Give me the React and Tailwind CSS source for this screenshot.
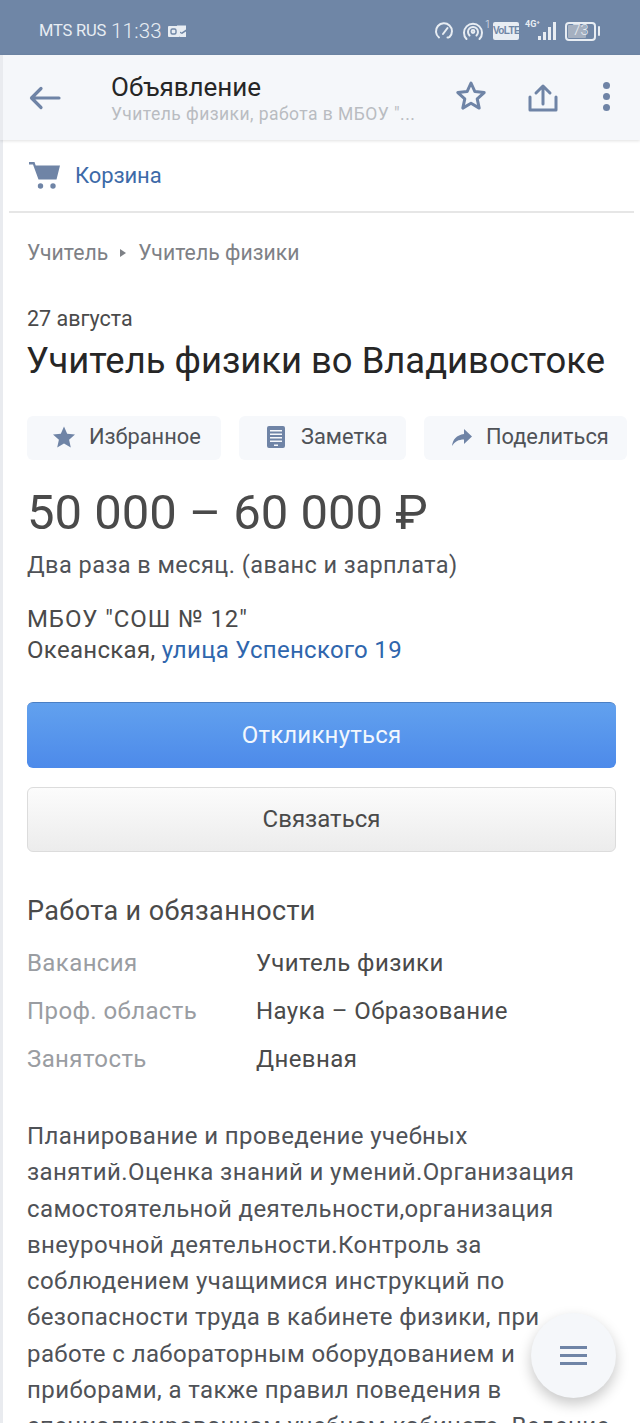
import React from "react";

const slate = "#6f84a6";

function Status() {
  return (
    <div className="h-[55px] pt-[7px] bg-[#6f86a6] flex items-center justify-between pl-[39px] pr-[40px] text-[#e8edf3] shrink-0">
      <div className="flex items-center">
        <span className="text-[16.5px] tracking-[-0.2px]">MTS RUS</span>
        <span className="text-[20.5px] ml-[5px] font-light tracking-[0.2px]">11:33</span>
        <svg width="19" height="14" viewBox="0 0 19 14" className="ml-[6px]">
          <rect x="0" y="2" width="12" height="11" rx="1" fill="#e8edf3" />
          <rect x="3" y="5" width="5" height="5" rx="1.5" fill="none" stroke="#6f86a6" strokeWidth="1.4" />
          <path d="M9 1.5h9v4l-4.5 3L9 5.5zM12 9l2 1 4-2.5V13h-6z" fill="#e8edf3" />
        </svg>
      </div>
      <div className="flex items-center">
        <svg width="20" height="20" viewBox="0 0 20 20" fill="none" stroke="#e8edf3" strokeWidth="2" strokeLinecap="round">
          <path d="M5 16.500A8 8 0 1 1 15.500 16" />
          <path d="M9 13l4.500-6" />
          <path d="M13.500 16.500h1" />
        </svg>
        <svg width="22" height="22" viewBox="0 0 22 22" fill="none" stroke="#e8edf3" strokeWidth="2" strokeLinecap="round" className="ml-[8px]">
          <path d="M4.500 19a9 9 0 1 1 13 0" />
          <path d="M7.500 15.500a5 5 0 1 1 7 0" />
          <circle cx="11" cy="11.500" r="1.400" />
        </svg>
        <span className="text-[10px] self-start mt-[-3px] ml-[1px] font-light w-[5px]">1</span>
        <div className="ml-[3px] w-[26px] h-[18px] bg-[#e8edf3] rounded-[2px] text-[#6f86a6] text-[10px] leading-[18px] font-bold text-center tracking-[-0.6px] font-['Liberation_Sans',sans-serif] overflow-hidden">VoLTE</div>
        <div className="relative ml-[6px] w-[32px] h-[20px]">
          <span className="absolute left-0 top-[-2px] text-[9px] font-bold leading-[10px]">4G⁺</span>
          <svg width="32" height="20" viewBox="0 0 32 20" className="absolute inset-0" fill="#e8edf3">
            <rect x="13" y="15" width="3" height="4" />
            <rect x="18" y="11" width="3" height="8" />
            <rect x="23" y="6" width="3" height="13" />
            <rect x="28" y="1" width="3" height="18" />
          </svg>
        </div>
        <div className="ml-[8px] w-[31px] h-[19px] rounded-[4px] border-2 border-[#e8edf3] p-[1px] relative">
          <div className="h-full w-[73%] bg-[#a5b0c0] rounded-[1px]" />
          <span className="absolute inset-0 flex items-center justify-center text-[14.5px] font-light leading-none">73</span>
        </div>
        <div className="ml-[2px] w-[2px] h-[10px] bg-[#e8edf3] rounded-[1px]" />
      </div>
    </div>
  );
}

function Header() {
  return (
    <div className="h-[85px] bg-[#f5f7fa] border-l-[3px] border-[#e9ebef] shadow-[0_1px_3px_rgba(0,0,0,0.12)] flex items-center relative z-10 shrink-0">
      <svg width="32" height="24" viewBox="0 0 32 24" fill="none" stroke={slate} strokeWidth="3.2" strokeLinecap="round" strokeLinejoin="round" className="ml-[26px] mt-[1px]">
        <path d="M30 12H3M12 2.500L2.500 12 12 21.500" />
      </svg>
      <div className="ml-[50px] w-[330px] mt-[3px]">
        <div className="text-[26px] leading-[30px] text-[#262626]">Объявление</div>
        <div className="text-[17.5px] leading-[24px] text-[#b9bcc1] whitespace-nowrap tracking-[0.45px]">Учитель физики, работа в МБОУ "...</div>
      </div>
      <svg width="32" height="32" viewBox="0 0 32 32" fill="none" stroke={slate} strokeWidth="3" strokeLinejoin="round" className="ml-[14px] mt-[-4px]">
        <path d="M16 3l3.900 8.600 9.300 1-7 6.300 2 9.200-8.200-4.800-8.200 4.800 2-9.200-7-6.300 9.300-1z" />
      </svg>
      <svg width="30" height="30" viewBox="0 0 30 30" fill="none" stroke={slate} strokeWidth="3" strokeLinecap="round" strokeLinejoin="round" className="ml-[41px]">
        <path d="M2 14v13h26V14M15 21V3M8 10l7-7 7 7" />
      </svg>
      <div className="ml-[45px] mt-[-3px] flex flex-col gap-[4px]">
        <div className="w-[7px] h-[7px] rounded-full bg-[#6f84a6]" />
        <div className="w-[7px] h-[7px] rounded-full bg-[#6f84a6]" />
        <div className="w-[7px] h-[7px] rounded-full bg-[#6f84a6]" />
      </div>
    </div>
  );
}

function Chip({ icon, children, className }) {
  return (
    <div className={"h-[44px] pb-[2px] rounded-[6px] bg-[#f6f8fb] flex items-center text-[21.8px] text-[#4f5257] " + className}>
      {icon}
      {children}
    </div>
  );
}

function Row({ label, value }) {
  return (
    <div className="flex h-[48px] items-center text-[24px] tracking-[0.4px]">
      <div className="w-[229px] text-[#9a9da2]">{label}</div>
      <div className="text-[#4a4a4a]">{value}</div>
    </div>
  );
}

export default function App() {
  return (
    <div className="relative w-[640px] h-[1423px] overflow-hidden bg-white flex flex-col font-['Roboto','Noto_Sans',sans-serif]">
      <Status />
      <Header />
      <div className="flex-1 border-l-[3px] border-[#e9ebef] overflow-hidden">
        <div className="mx-[6px] h-[73px] border-b-2 border-[#e6e6e6] flex items-center pl-[20px]">
          <svg width="32" height="30" viewBox="0 0 32 30" fill={slate}>
            <path d="M0 1h5.500l1.200 3.500H31l-3.500 14H9.500L4 3.500H0z" />
            <circle cx="11.500" cy="25" r="2.700" />
            <circle cx="24" cy="25" r="2.700" />
          </svg>
          <span className="ml-[14px] text-[22px] text-[#3d6aa8] tracking-[-0.1px]">Корзина</span>
        </div>
        <div className="pl-[24px]">
          <div className="flex items-center h-[30px] mt-[25px] text-[21.2px] text-[#7e8186]">
            <span>Учитель</span>
            <span className="mx-[12px] w-0 h-0 border-y-[4.5px] border-y-transparent border-l-[6px] border-l-[#7e8186]" />
            <span className="tracking-[0.05px]">Учитель физики</span>
          </div>
          <div className="mt-[36px] h-[30px] leading-[30px] text-[21.5px] text-[#4a4a4a]">27 августа</div>
          <div className="mt-[2px] ml-[-1px] h-[50px] leading-[50px] text-[36.4px] text-[#262626] whitespace-nowrap">Учитель физики во Владивостоке</div>
          <div className="mt-[30px] flex">
            <Chip className="w-[194px] pl-[25px]" icon={
              <svg width="24" height="24" viewBox="0 0 24 24" fill={slate} className="mr-[13px]"><path d="M12 1.500l3.200 7.200 7.800.8-5.900 5.200 1.700 7.700L12 18.400l-6.800 4 1.700-7.700L1 9.500l7.800-.8z" /></svg>
            }>Избранное</Chip>
            <Chip className="w-[167px] ml-[18px] pl-[28px]" icon={
              <svg width="18" height="22" viewBox="0 0 18 22" className="mr-[16px]"><path fillRule="evenodd" fill={slate} d="M2 0h14a2 2 0 0 1 2 2v18a2 2 0 0 1-2 2H2a2 2 0 0 1-2-2V2a2 2 0 0 1 2-2zM3 4v1.500h12V4zm0 3.500V9h12V7.500zM3 11v1.500h12V11zm0 3.500V16h12v-1.500zM7 18.500V20h4v-1.500z" /></svg>
            }>Заметка</Chip>
            <Chip className="w-[203px] ml-[18px] pl-[28px]" icon={
              <svg width="20" height="17" viewBox="0 0 20 17" fill={slate} className="mr-[14px]"><path d="M12 0l8 7.500-8 7.500v-4.500C6.500 10.500 3 12.500 0 17c.8-6.500 4.500-11 12-12z" /></svg>
            }>Поделиться</Chip>
          </div>
          <div className="mt-[23px] h-[60px] leading-[60px] text-[49px] text-[#4a4a4a]">50 000 – 60 000 ₽</div>
          <div className="mt-[6px] h-[32px] leading-[32px] text-[23.5px] tracking-[0.45px] text-[#4f5257]">Два раза в месяц. (аванс и зарплата)</div>
          <div className="mt-[22px] h-[32px] leading-[32px] text-[24px] tracking-[0.9px] text-[#4a4a4a]">МБОУ "СОШ № 12"</div>
          <div className="mt-[-1px] h-[32px] leading-[32px] text-[24px] tracking-[0.3px] text-[#4a4a4a]">Океанская, <span className="text-[#2f66ad]">улица Успенского 19</span></div>
          <div className="mt-[36px] w-[589px] h-[66px] pb-[2px] rounded-[6px] bg-linear-to-b from-[#62a1ee] to-[#4d8aea] border-t border-[#4a7fc4] flex items-center justify-center text-[24px] tracking-[0.2px] text-[#f2f7fd]">Откликнуться</div>
          <div className="mt-[19px] w-[589px] h-[65px] pb-[1px] rounded-[6px] bg-linear-to-b from-[#fcfcfc] to-[#ececec] border border-[#dcdcdc] flex items-center justify-center text-[24px] text-[#4a4a4a]">Связаться</div>
          <div className="mt-[41px] h-[36px] leading-[36px] text-[27px] tracking-[0.4px] text-[#4a4a4a]">Работа и обязанности</div>
          <div className="mt-[10px]">
            <Row label="Вакансия" value="Учитель физики" />
            <Row label="Проф. область" value="Наука – Образование" />
            <Row label="Занятость" value="Дневная" />
          </div>
          <div className="mt-[35px] w-[590px] text-[24px] leading-[36.3px] tracking-[0.4px] text-[#4f5257]">
            Планирование и проведение учебных<br />
            занятий.Оценка знаний и умений.Организация<br />
            самостоятельной деятельности,организация<br />
            внеурочной деятельности.Контроль за<br />
            соблюдением учащимися инструкций по<br />
            безопасности труда в кабинете физики, при<br />
            работе с лабораторным оборудованием и<br />
            приборами, а также правил поведения в<br />
            специализированном учебном кабинете. Ведение
          </div>
        </div>
      </div>
      <div className="absolute left-[531px] top-[1313px] w-[85px] h-[85px] rounded-full bg-[#f5f7fa] shadow-[0_6px_14px_rgba(0,0,0,0.22)] flex flex-col items-center justify-center gap-[5px]">
        <div className="w-[27px] h-[3px] bg-[#6f84a6]" />
        <div className="w-[27px] h-[3px] bg-[#6f84a6]" />
        <div className="w-[27px] h-[3px] bg-[#6f84a6]" />
      </div>
    </div>
  );
}
